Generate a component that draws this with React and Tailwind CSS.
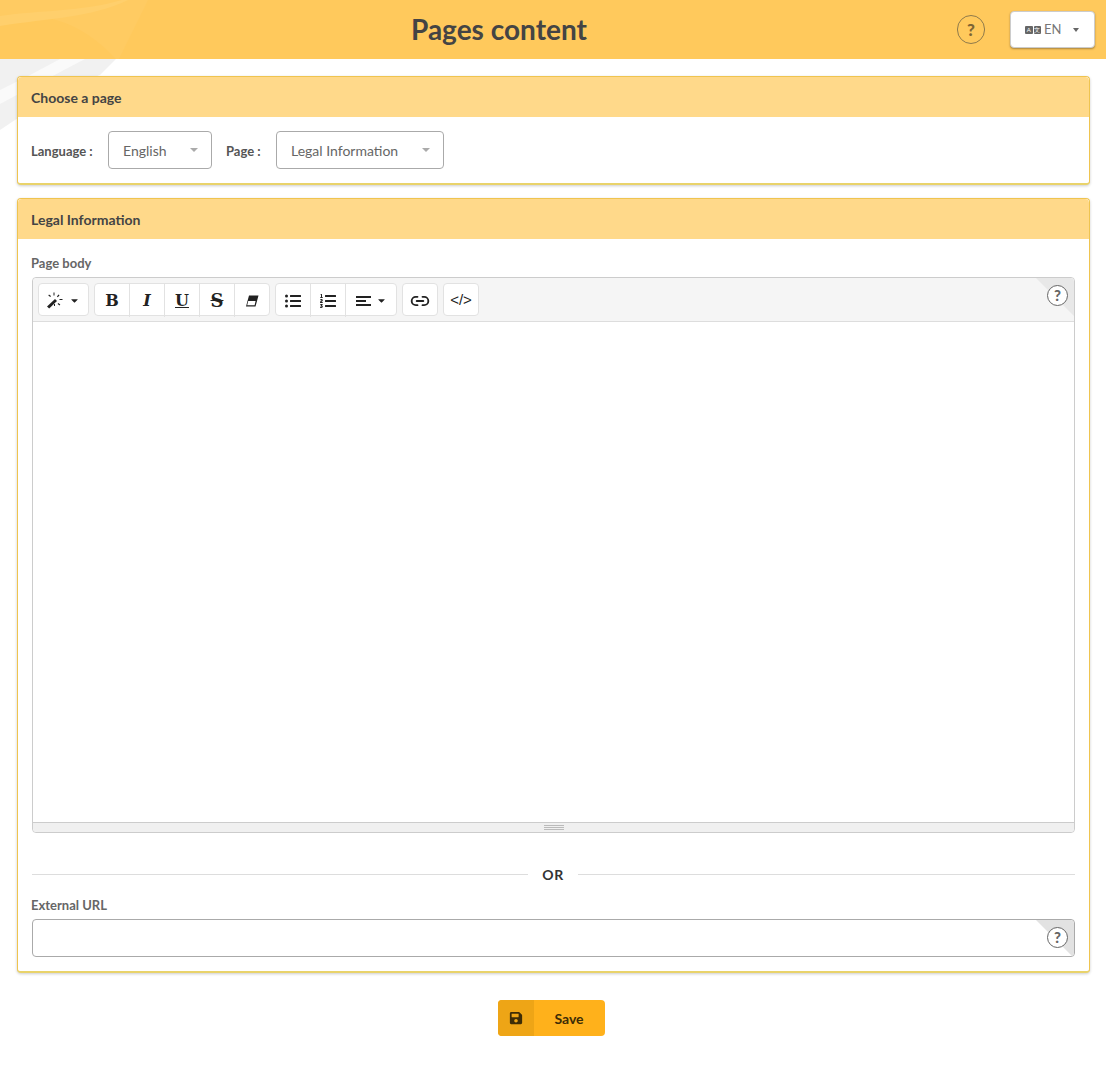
import { FaCaretDown, FaListUl, FaListOl, FaSave } from 'react-icons/fa';
import { Link2 } from 'lucide-react';

function Card({ title, children, className = '' }) {
  return (
    <section className={`rounded border border-[#efc44f] border-b-2 border-b-[#e9d36a] shadow-[0_1px_3px_rgba(0,0,0,0.2)] bg-white ${className}`}>
      <h2 className="h-[40px] bg-[#ffd98a] px-[13px] flex items-center text-[14px] font-bold text-[#444] rounded-t">{title}</h2>
      {children}
    </section>
  );
}

function Select({ value, className }) {
  return (
    <div className={`h-[38px] flex items-center justify-between pl-[14px] pr-[13px] rounded border border-[#aaa] text-[14px] text-[#666] bg-white ${className}`}>
      <span>{value}</span>
      <span className="w-0 h-0 border-x-[4px] border-x-transparent border-t-[4px] border-t-[#aaa]" />
    </div>
  );
}

function HelpCorner({ dark }) {
  return (
    <>
      <div className={`absolute top-0 right-0 w-[38px] h-[38px] rounded-tr [clip-path:polygon(0_0,100%_0,100%_100%)] ${dark ? 'bg-[#e2e2e2]' : 'bg-[#e8e8e8]'}`} />
      <div className="absolute top-[7px] right-[6px] w-[21px] h-[21px] rounded-full border border-[#666] bg-white flex items-center justify-center text-[15px] font-black text-[#666] leading-none">?</div>
    </>
  );
}

function ToolBtn({ children, className = '' }) {
  return (
    <div className={`h-[33px] flex items-center justify-center text-[#222] border-l border-[#e2e2e2] first:border-l-0 ${className}`}>
      {children}
    </div>
  );
}

function Group({ children }) {
  return <div className="flex h-[33px] bg-white rounded border border-[#e2e2e2]">{children}</div>;
}

function Caret() {
  return <FaCaretDown className="text-[11px] ml-[5px]" />;
}

function WandIcon() {
  return (
    <svg width="17" height="17" viewBox="0 0 17 17" fill="#222">
      <path d="M0 14.5 L8 7 L10 9 L2.2 16.5 Z" />
      <path d="M6.5 0.5h1v3h-1zM12.5 7h3v1h-3zM11.5 2.5l1 .7-1.6 2-1-.7zM2 2.5l2 1.6-.7.9-2-1.6zM11.3 11l2 1.6-.7.9-2-1.6zM7 12h1v2H7z" />
    </svg>
  );
}

function EraserIcon() {
  return (
    <svg width="14" height="12" viewBox="0 0 14 12" fill="#222">
      <path d="M4 0.5 H13.5 L10.5 11.5 H1 Z M3.2 6 L2.2 10.3 H9.6 L10.6 6 Z" fillRule="evenodd" />
    </svg>
  );
}

function AlignIcon() {
  return (
    <svg width="15" height="12" viewBox="0 0 15 12" fill="#222">
      <rect x="0" y="1" width="15" height="2" />
      <rect x="0" y="5" width="10" height="2" />
      <rect x="0" y="9" width="15" height="2" />
    </svg>
  );
}

export default function App() {
  return (
    <div className="relative w-[1106px] h-[1068px] overflow-hidden bg-white font-['Lato','Liberation_Sans',sans-serif]">
      {/* swoosh behind the header */}
      <svg className="absolute top-0 left-0" width="150" height="130" viewBox="0 0 150 130">
        <path d="M0 130 C30 110 70 85 100 75 L116 59 L0 59 Z" fill="#f1f1f1" />
        <path d="M0 104 C30 88 60 72 85 59 L60 59 C40 70 20 80 0 90 Z" fill="#fafafa" />
      </svg>

      <header className="relative h-[59px] bg-[#ffc95c] overflow-hidden">
        <svg className="absolute top-0 left-0" width="150" height="59" viewBox="0 0 150 59">
          <path d="M0 18 C40 10 80 20 116 59 L119 59 L148 0 L0 0 Z" fill="#ffcb62" />
          <path d="M0 16 C40 10 80 12 122 0 L128 0 C90 18 50 18 0 26 Z" fill="#ffcf6c" />
        </svg>
        <h1 className="absolute left-[411px] top-[10px] text-[28px] leading-[38px] font-bold text-[#444]">Pages content</h1>
        <div className="absolute left-[957px] top-[15px] w-[28px] h-[29px] rounded-full border border-[#8f7a4b] flex items-center justify-center text-[17px] font-black text-[#7d6434] leading-none">?</div>
        <div className="absolute left-[1010px] top-[11px] w-[85px] h-[37px] rounded bg-white border border-[#ccc] shadow-[0_1px_2px_rgba(0,0,0,0.35)] flex items-center pl-[14px] text-[13px] text-[#777]">
          <span className="flex gap-px mr-[3px]">
            <span className="w-[7.5px] h-[8px] bg-[#666] text-white text-[6px] leading-[8px] text-center rounded-[1px]">A</span>
            <span className="w-[7.5px] h-[8px] bg-[#666] text-white text-[6px] leading-[8px] text-center rounded-[1px]">文</span>
          </span>
          <span>EN</span>
          <span className="ml-[12px] w-0 h-0 border-x-[3.5px] border-x-transparent border-t-[4px] border-t-[#666]" />
        </div>
      </header>

      <main className="relative pl-[17px] pt-[17px] w-[1090px]">
        <Card title="Choose a page">
          <div className="h-[66px] px-[13px] flex items-center text-[13px] font-bold text-[#555]">
            <span className="w-[77px] mt-[3px]">Language :</span>
            <Select value="English" className="w-[104px] font-normal" />
            <span className="ml-[14px] w-[50px] mt-[3px]">Page :</span>
            <Select value="Legal Information" className="w-[168px] font-normal" />
          </div>
        </Card>

        <Card title="Legal Information" className="mt-[13px]">
          <div className="px-[14px] pt-[16px] pb-[14px]">
            <label className="block -ml-px text-[13px] leading-[16px] font-bold text-[#666] mb-[6px]">Page body</label>
            <div className="rounded border border-[#ccc]">
              <div className="relative h-[44px] bg-[#f5f5f5] border-b border-[#ddd] rounded-t flex gap-[5px] pl-[5px] pt-[5px]">
                <HelpCorner />
                <Group>
                  <ToolBtn className="w-[49px]"><WandIcon /><Caret /></ToolBtn>
                </Group>
                <Group>
                  <ToolBtn className="w-[34px] font-['DejaVu_Serif',serif] font-bold text-[16px]">B</ToolBtn>
                  <ToolBtn className="w-[35px] font-['DejaVu_Serif',serif] font-bold italic text-[16px]">I</ToolBtn>
                  <ToolBtn className="w-[35px] font-['DejaVu_Serif',serif] font-bold underline text-[16px]">U</ToolBtn>
                  <ToolBtn className="w-[35px] font-['DejaVu_Serif',serif] font-bold line-through text-[18px]">S</ToolBtn>
                  <ToolBtn className="w-[35px]"><EraserIcon /></ToolBtn>
                </Group>
                <Group>
                  <ToolBtn className="w-[34px]"><FaListUl className="text-[16px]" /></ToolBtn>
                  <ToolBtn className="w-[35px]"><FaListOl className="text-[16px]" /></ToolBtn>
                  <ToolBtn className="w-[51px]"><AlignIcon /><Caret /></ToolBtn>
                </Group>
                <Group>
                  <ToolBtn className="w-[34px]"><Link2 size={20} strokeWidth={2.2} /></ToolBtn>
                </Group>
                <Group>
                  <ToolBtn className="w-[34px] text-[15px] font-['Liberation_Sans',sans-serif]">&lt;/&gt;</ToolBtn>
                </Group>
              </div>
              <div className="h-[500px] bg-white" />
              <div className="h-[10px] bg-[#f0f0f0] border-t border-[#ccc] rounded-b flex flex-col items-center justify-center gap-px">
                <span className="w-[20px] h-px bg-[#bbb]" />
                <span className="w-[20px] h-px bg-[#bbb]" />
                <span className="w-[20px] h-px bg-[#bbb]" />
              </div>
            </div>

            <div className="flex items-center mt-[31px] h-[20px]">
              <div className="w-[496px] h-px bg-[#ddd]" />
              <span className="w-[50px] text-center text-[14px] font-bold tracking-[0.7px] text-[#333]">OR</span>
              <div className="flex-1 h-px bg-[#ddd]" />
            </div>

            <label className="block -ml-px mt-[13px] text-[13px] leading-[16px] font-bold text-[#666] mb-[6px]">External URL</label>
            <div className="relative h-[38px] rounded border border-[#aaa] overflow-hidden">
              <HelpCorner dark />
            </div>
          </div>
        </Card>

        <div className="mt-[27px] flex justify-center pr-[5px]">
          <button className="w-[107px] h-[36px] rounded bg-[#ffb11b] flex items-center text-[14px] font-bold text-[#3d2c06] overflow-hidden">
            <span className="w-[36px] h-full bg-[#eea516] flex items-center justify-center"><FaSave className="text-[14px]" /></span>
            <span className="flex-1 text-center">Save</span>
          </button>
        </div>
      </main>
    </div>
  );
}
